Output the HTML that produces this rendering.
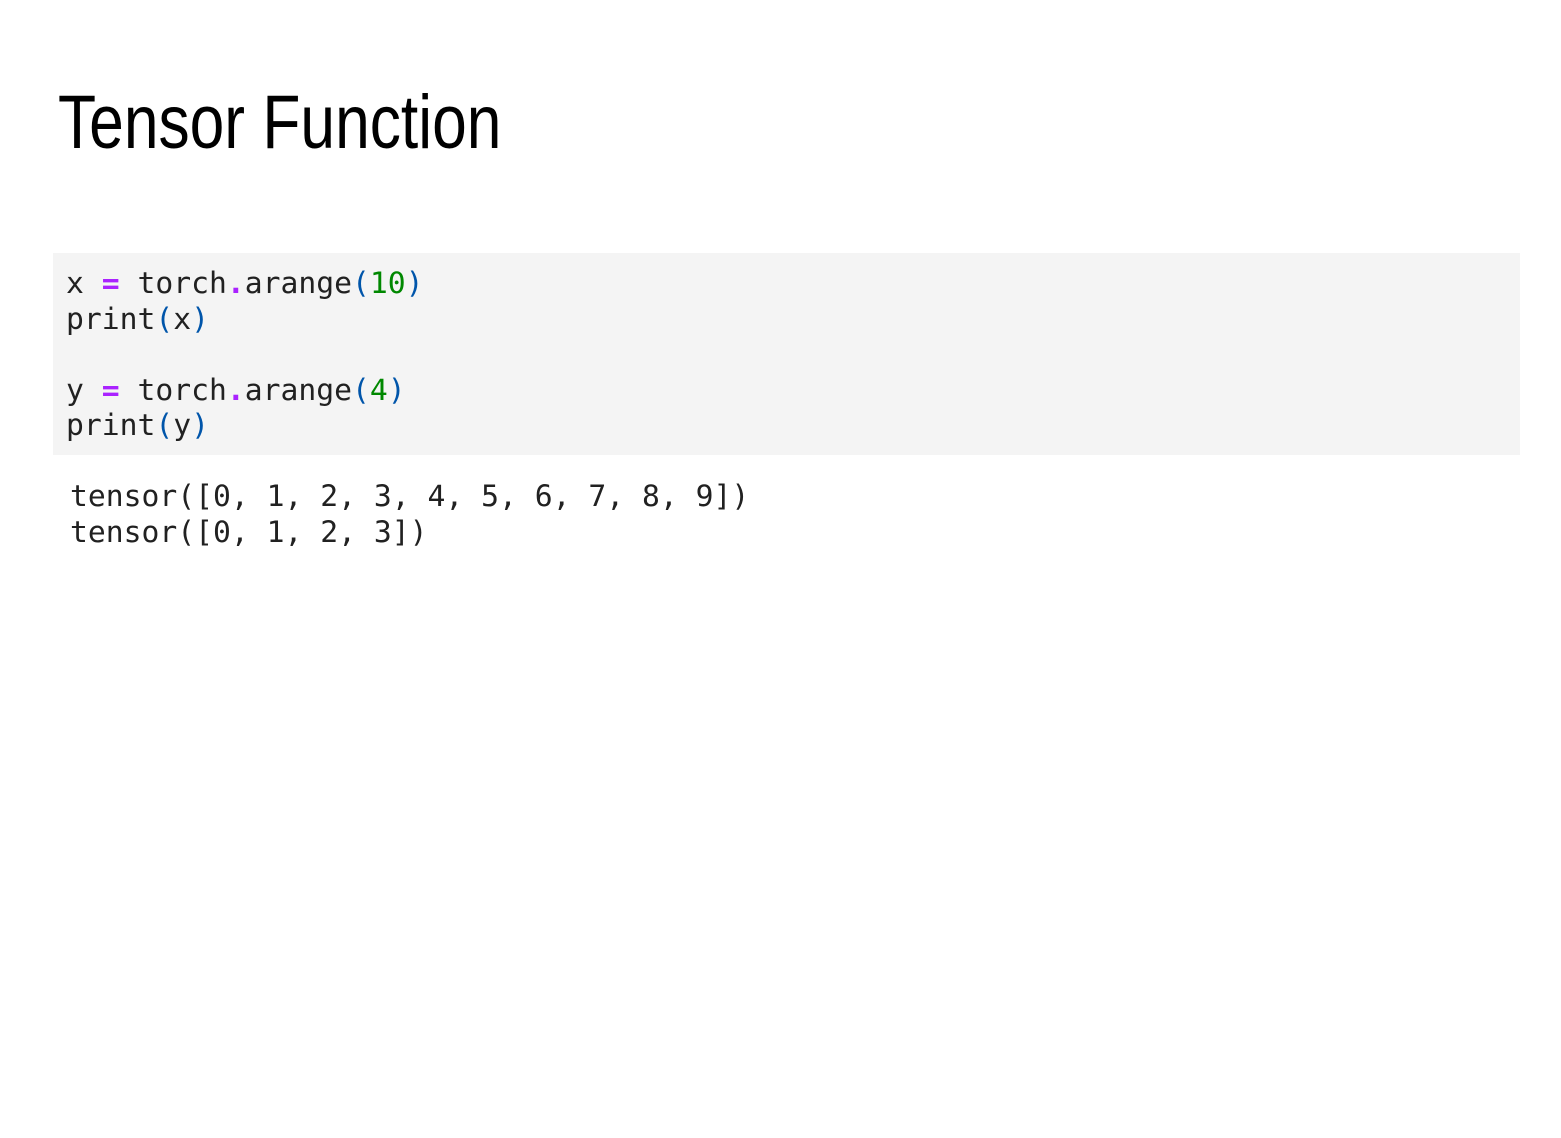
<!DOCTYPE html>
<html><head><meta charset="utf-8"><style>
html,body{margin:0;padding:0;background:#fff;width:1561px;height:1138px;overflow:hidden}
h1{position:absolute;left:58px;top:78px;margin:0;font-family:"Liberation Sans",sans-serif;font-weight:normal;font-size:76px;line-height:90px;color:#000;transform:scaleX(0.82);transform-origin:left top;white-space:nowrap}
.code{position:absolute;left:53px;top:253px;width:1467px;height:202px;background:#f4f4f4}
pre{margin:0;font-family:"DejaVu Sans Mono","Liberation Mono",monospace;font-size:29.7px;line-height:35.5px;color:#212121;white-space:pre}
.o{color:#aa22ff;font-weight:bold}.p{color:#0055aa}.n{color:#008800}
.out{position:absolute;left:70px;top:479px}
</style></head><body>
<h1>Tensor Function</h1>
<div class="code"></div>
<pre style="position:absolute;left:66px;top:266px">x <span class="o">=</span> torch<span class="o">.</span>arange<span class="p">(</span><span class="n">10</span><span class="p">)</span>
print<span class="p">(</span>x<span class="p">)</span>

y <span class="o">=</span> torch<span class="o">.</span>arange<span class="p">(</span><span class="n">4</span><span class="p">)</span>
print<span class="p">(</span>y<span class="p">)</span></pre>
<pre class="out">tensor([0, 1, 2, 3, 4, 5, 6, 7, 8, 9])
tensor([0, 1, 2, 3])</pre>
</body></html>
